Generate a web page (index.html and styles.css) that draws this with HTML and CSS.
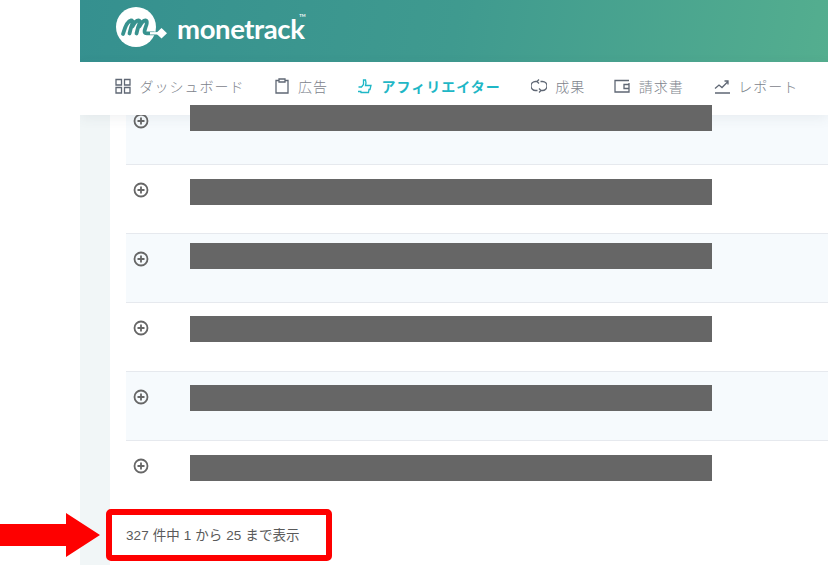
FILE: index.html
```html
<!DOCTYPE html>
<html lang="ja">
<head>
<meta charset="utf-8">
<title>monetrack</title>
<link rel="stylesheet" href="styles.css">
</head>
<body>
<div class="app">
  <header class="topbar">
    <svg class="logo-mark" width="52" height="40" viewBox="0 0 52 40">
      <circle cx="20" cy="20" r="20" fill="#fff"/>
      <path d="M7 27 C9 20 11.500 14 15 13.500 C17.500 13.300 16.500 17 15 20.500 L13.500 26.500 M16.500 19.500 C18.500 15.500 20.500 13.300 22.500 13.500 C24.500 13.800 23.500 17 22 20.500 L20.500 26.500 M23.500 19.500 C25.500 15.500 27.500 13.300 29.500 13.500 C31.500 13.800 31 17 29.500 20.500 C28 24.500 28 26.300 31 26.300 L38 26.300" fill="none" stroke="#38928f" stroke-width="3.800" stroke-linecap="round"/>
      <path d="M34 26.300 H42" stroke="#fff" stroke-width="2.400"/>
      <path d="M40 26.300 L45.500 21 L51 26.300 L45.500 31.500 Z" fill="#fff"/>
    </svg>
    <span class="brand">monetrack<sup class="tm">TM</sup></span>
  </header>
  <nav class="mainnav">
    <a class="navitem">
      <svg class="navicon" viewBox="0 0 16 16"><path d="M1 1.500h5.500v5.500h-5.500zM9.500 1.500h5.500v5.500h-5.500zM1 9.500h5.500v5.500h-5.500zM9.500 9.500h5.500v5.500h-5.500z"/></svg>
      <span>ダッシュボード</span>
    </a>
    <a class="navitem">
      <svg class="navicon" viewBox="0 0 16 16"><path d="M5 2.500h-3v12.500h12v-12.500h-3M5 1h6v3h-6z"/></svg>
      <span>広告</span>
    </a>
    <a class="navitem active wide">
      <svg class="navicon" viewBox="0 0 16 16"><path d="M1 13.500h3.500M1.500 9h3l2-2.500v-4.500h2l.5 3-.5 2.500h5.500l-1 4h-1l-.5 3h-7.500l-.5-1.500"/></svg>
      <span>アフィリエイター</span>
    </a>
    <a class="navitem">
      <svg class="navicon" viewBox="0 0 16 16"><path d="M6 3.500h-1.500a4.500 4.500 0 0 0 0 9h2M10 12.500h1.500a4.500 4.500 0 0 0 0-9h-2M8 1.500l-2 2 2 2M8 10.500l2 2-2 2"/></svg>
      <span>成果</span>
    </a>
    <a class="navitem wide">
      <svg class="navicon" viewBox="0 0 16 16"><path d="M15 5v9h-14v-11.500h14M15 6.500h-5v4h5"/></svg>
      <span>請求書</span>
    </a>
    <a class="navitem">
      <svg class="navicon" viewBox="0 0 16 16"><path d="M1 15h15M1 10.500l4-3.500 3 2.500 6-6M10.500 3h3.500v3.500"/></svg>
      <span>レポート</span>
    </a>
  </nav>
  <div class="content">
    <main class="card">
      <div class="table">
        <div class="row shaded"><div class="rowicon"><svg class="expand" viewBox="0 0 16 16"><circle cx="8" cy="8" r="6.500"/><path d="M8 4.500v7M4.500 8h7"/></svg></div><div class="redact at-9"></div></div>
        <div class="row"><div class="rowicon"><svg class="expand" viewBox="0 0 16 16"><circle cx="8" cy="8" r="6.500"/><path d="M8 4.500v7M4.500 8h7"/></svg></div><div class="redact at-14"></div></div>
        <div class="row shaded"><div class="rowicon"><svg class="expand" viewBox="0 0 16 16"><circle cx="8" cy="8" r="6.500"/><path d="M8 4.500v7M4.500 8h7"/></svg></div><div class="redact at-9"></div></div>
        <div class="row"><div class="rowicon"><svg class="expand" viewBox="0 0 16 16"><circle cx="8" cy="8" r="6.500"/><path d="M8 4.500v7M4.500 8h7"/></svg></div><div class="redact at-13"></div></div>
        <div class="row shaded"><div class="rowicon"><svg class="expand" viewBox="0 0 16 16"><circle cx="8" cy="8" r="6.500"/><path d="M8 4.500v7M4.500 8h7"/></svg></div><div class="redact at-13"></div></div>
        <div class="row last"><div class="rowicon"><svg class="expand" viewBox="0 0 16 16"><circle cx="8" cy="8" r="6.500"/><path d="M8 4.500v7M4.500 8h7"/></svg></div><div class="redact at-14"></div></div>
      </div>
      <p class="info">327 件中 1 から 25 まで表示</p>
    </main>
  </div>
</div>
<div class="callout-box"></div>
<svg class="callout-arrow" width="100" height="44" viewBox="0 0 100 44"><path d="M0 11H66V0L100 22 66 44V33H0Z"/></svg>
</body>
</html>
```
FILE: styles.css
```css
* { box-sizing: border-box; }
html, body { margin: 0; height: 565px; overflow: hidden; background: #fff; }
body { font-family: "Noto Sans CJK JP", "Noto Sans", sans-serif; position: relative; }
.app { margin-left: 80px; width: 748px; height: 565px; display: flex; flex-direction: column; overflow: hidden; background: #f1f6f7; }

.topbar { height: 62px; flex: none; display: flex; align-items: center; padding: 0 0 8px 36px; background: linear-gradient(100deg, #35908f 0%, #3f9a8f 50%, #54ae8f 100%); }
.logo-mark { flex: none; margin-right: 9px; }
.brand { font-family: Lato, "Open Sans", sans-serif; font-weight: 700; font-size: 27.500px; letter-spacing: -0.4px; color: #fff; position: relative; line-height: 1; margin-top: 4px; }
.tm { position: absolute; top: -1px; right: -1px; font-size: 4px; letter-spacing: 0; line-height: 1; }

.mainnav { height: 53px; flex: none; display: flex; align-items: center; gap: 29px; padding: 0 0 6px 35px; background: #fff; box-shadow: 0 3px 12px rgba(60, 80, 90, .08); position: relative; z-index: 2; }
.navitem { display: flex; align-items: center; gap: 8.500px; font-size: 14px; font-weight: 300; letter-spacing: 1px; color: #7d838c; white-space: nowrap; }
.navitem.active { color: #1fb7c6; font-weight: 700; }
.navitem.wide { margin-right: 1px; }
.navicon { width: 16px; height: 16px; fill: none; stroke: #5f6774; stroke-width: 1.300; flex: none; }
.active .navicon { stroke: #1fb7c6; }

.content { flex: 1; min-height: 0; padding-left: 30px; }
.card { width: 760px; height: 100%; background: #fff; padding-left: 16px; display: flow-root; }
.table { margin-top: -19px; width: 744px; }
.row { height: 69px; display: flex; align-items: flex-start; border-bottom: 1px solid #e6e9ee; background: #fff; }
.row.shaded { background: #f6fafd; }
.row.last { border-bottom: 0; }
.rowicon { width: 64px; padding: 17px 0 0 7px; flex: none; }
.expand { display: block; width: 16px; height: 16px; fill: none; stroke: #666; stroke-width: 1.800; }
.redact { width: 522px; height: 26px; background: #666; position: relative; z-index: 3; }
.at-9 { margin-top: 9px; }
.at-13 { margin-top: 13px; }
.at-14 { margin-top: 14px; }

.info { margin: 16px 0 0; font-family: "Liberation Sans", "Noto Sans CJK JP", sans-serif; font-size: 13.500px; letter-spacing: .1px; line-height: 20px; color: #5a5a5a; white-space: nowrap; }

.callout-box { position: absolute; left: 106px; top: 509px; width: 226px; height: 52px; border: 6px solid #fe0000; border-radius: 5px; }
.callout-arrow { position: absolute; left: 0; top: 513px; fill: #fe0000; }
```
